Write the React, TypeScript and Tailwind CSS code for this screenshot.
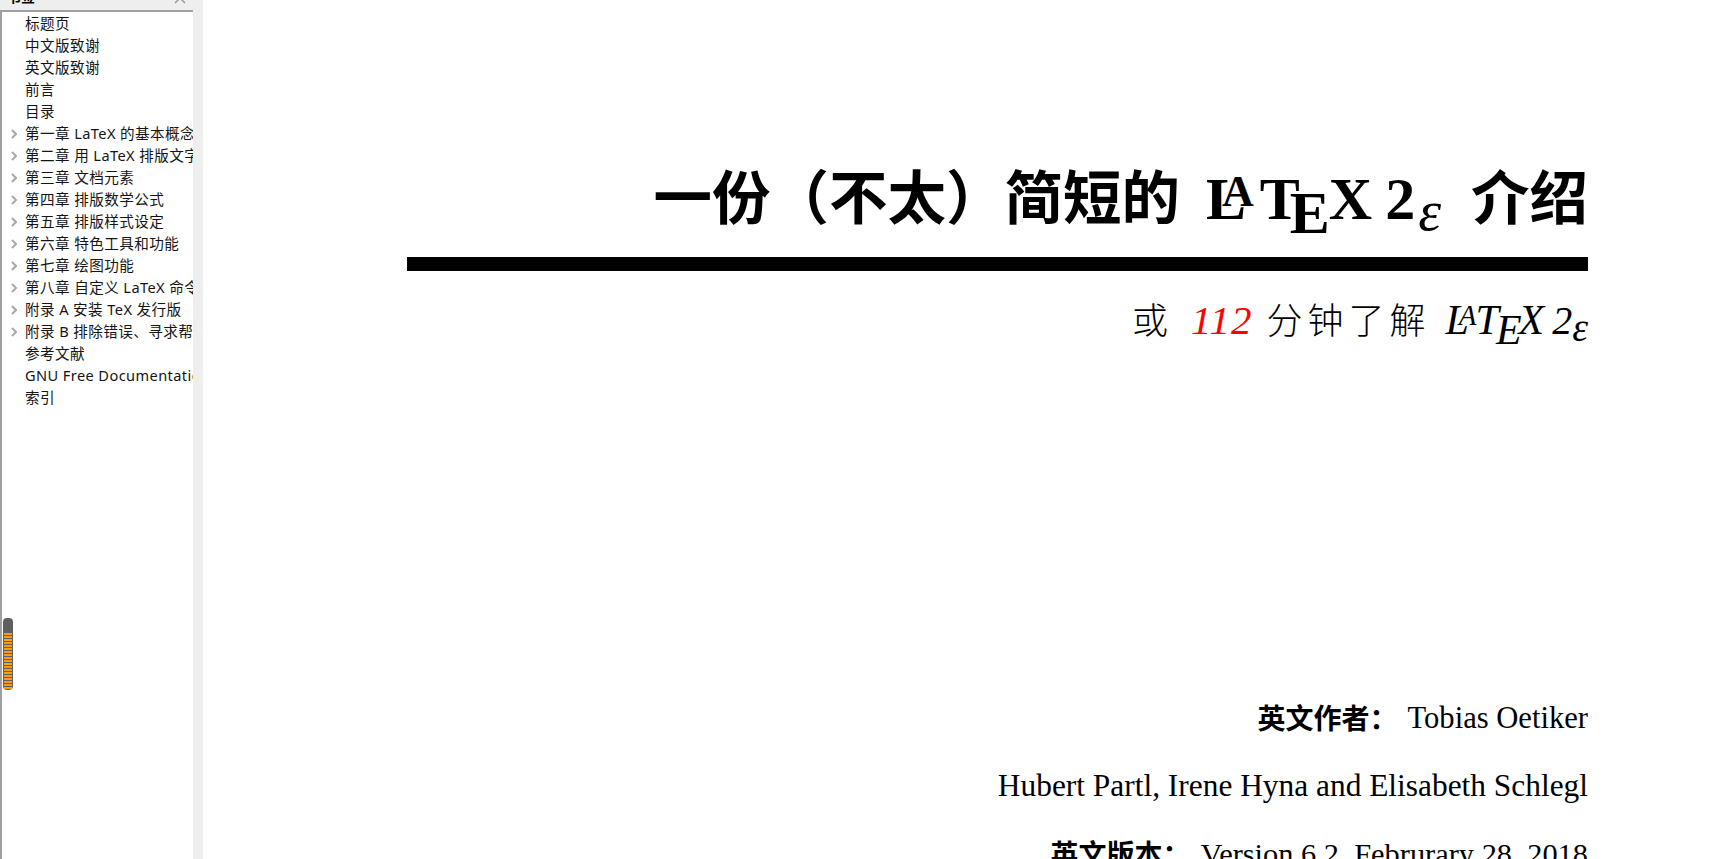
const bookmarks = [
  { label: '标题页' },
  { label: '中文版致谢' },
  { label: '英文版致谢' },
  { label: '前言' },
  { label: '目录' },
  { label: '第一章 LaTeX 的基本概念', more: true },
  { label: '第二章 用 LaTeX 排版文字', more: true },
  { label: '第三章 文档元素', more: true },
  { label: '第四章 排版数学公式', more: true },
  { label: '第五章 排版样式设定', more: true },
  { label: '第六章 特色工具和功能', more: true },
  { label: '第七章 绘图功能', more: true },
  { label: '第八章 自定义 LaTeX 命令和宏包', more: true },
  { label: '附录 A 安装 TeX 发行版', more: true },
  { label: '附录 B 排除错误、寻求帮助', more: true },
  { label: '参考文献' },
  { label: 'GNU Free Documentation License' },
  { label: '索引' },
];

const stripes = Array.from({ length: 19 });

const Chevron = () => (
  <svg width="6" height="10" viewBox="0 0 6 10" className="mt-[2px] shrink-0">
    <path d="M1 1l4 4-4 4" fill="none" stroke="#a8a8a8" strokeWidth="2" />
  </svg>
);

const TitleLogo = () => (
  <span className="whitespace-nowrap font-['Liberation_Serif',serif] text-[60px] font-bold">
    L
    <span className="-ml-[0.55em] align-[0.29em] text-[44px]">A</span>
    <span className="ml-[6px]">T</span>
    <span className="-ml-[10px] align-[-14px]">E</span>
    <span className="-ml-[1px]">X</span>
  </span>
);

const SubtitleLogo = () => (
  <span className="whitespace-nowrap font-['Liberation_Serif',serif] text-[42px] italic">
    L
    <span className="-ml-[10px] align-[9px] text-[29px]">A</span>
    <span className="-ml-[1px]">T</span>
    <span className="-ml-[3px] align-[-10px]">E</span>
    <span className="-ml-[3px]">X</span>
  </span>
);

const Sidebar = () => (
  <aside className="relative flex w-[203px] shrink-0 flex-col bg-[#eeeeee]">
    <div className="flex h-[12px] w-[193px] justify-between overflow-hidden border-b-2 border-[#a0a0a0] pl-[7px] pr-[7px]">
      <span className="-mt-[14px] text-[14px] font-bold leading-[22px] text-black">书签</span>
      <svg width="12" height="12" viewBox="0 0 12 12" className="-mt-[8px] shrink-0">
        <path d="M1 1l10 10M11 1L1 11" stroke="#9a9a9a" strokeWidth="1.5" />
      </svg>
    </div>
    <div className="w-[193px] flex-1 overflow-hidden border-l-2 border-[#a0a0a0] bg-white">
      {bookmarks.map((item) => (
        <div key={item.label} className="flex h-[22px] items-center whitespace-nowrap text-[14.6px] leading-[22px] tracking-[0.4px] text-[#141414]">
          <div className="flex w-[23px] shrink-0 justify-center pl-[1px]">{item.more && <Chevron />}</div>
          <span>{item.label}</span>
        </div>
      ))}
    </div>
    {/* 滚动指示条 */}
    <div className="absolute left-[3px] top-[618px] flex h-[72px] w-[10px] flex-col gap-[1px] rounded-[4px] bg-[#5f5f5f] px-[1px] pb-[3px] pt-[15px]">
      {stripes.map((_, i) => (
        <div key={i} className="h-[2px] shrink-0 bg-[#ff9c14]" />
      ))}
    </div>
  </aside>
);

export default function App() {
  return (
    <div className="flex h-[859px] overflow-hidden bg-white font-['Noto_Sans','Noto_Sans_CJK_SC',sans-serif] text-black">
      <Sidebar />
      <main className="flex flex-1 flex-col items-end overflow-hidden pr-[147px] pt-[152px]">
        <h1 className="h-[80px] whitespace-nowrap text-[58.5px] font-bold leading-[80px]">
          <span>一份（不太）简短的</span>
          <span className="ml-[26px]"><TitleLogo /></span>
          <span className="ml-[13px] font-['Liberation_Serif',serif] text-[60px]">2</span>
          <span className="ml-[3px] align-[-11px] font-['Liberation_Serif',serif] text-[58px] font-normal italic">ε</span>
          <span className="ml-[30px]">介绍</span>
        </h1>
        <div className="mt-[25px] h-[14px] w-[1181px] shrink-0 bg-black" />
        <div className="mt-[19px] h-[50px] whitespace-nowrap text-[36px] font-light leading-[50px]">
          <span>或</span>
          <span className="ml-[23px] font-['Liberation_Serif',serif] text-[41px] italic tracking-[1px] text-[#ff0000]">112</span>
          <span className="ml-[14px] tracking-[5px]">分钟了解</span>
          <span className="ml-[15px]"><SubtitleLogo /></span>
          <span className="ml-[8px] font-['Liberation_Serif',serif] text-[40px] italic">2</span>
          <span className="align-[-7px] font-['Liberation_Serif',serif] text-[40px] italic">ε</span>
        </div>
        <div className="mt-[358px] flex h-[40px] items-center whitespace-nowrap text-[28px] leading-[40px]">
          <span className="font-bold">英文作者：</span>
          <span className="ml-[10px] font-['Liberation_Serif',serif] text-[30.6px]">Tobias Oetiker</span>
        </div>
        <div className="mt-[28px] h-[40px] whitespace-nowrap font-['Liberation_Serif',serif] text-[31.4px] leading-[40px]">
          Hubert Partl, Irene Hyna and Elisabeth Schlegl
        </div>
        <div className="mt-[28px] flex h-[40px] items-center whitespace-nowrap text-[28px] leading-[40px]">
          <span className="font-bold">英文版本：</span>
          <span className="ml-[10px] font-['Liberation_Serif',serif] text-[30.4px]">Version 6.2, Februrary 28, 2018</span>
        </div>
      </main>
    </div>
  );
}
